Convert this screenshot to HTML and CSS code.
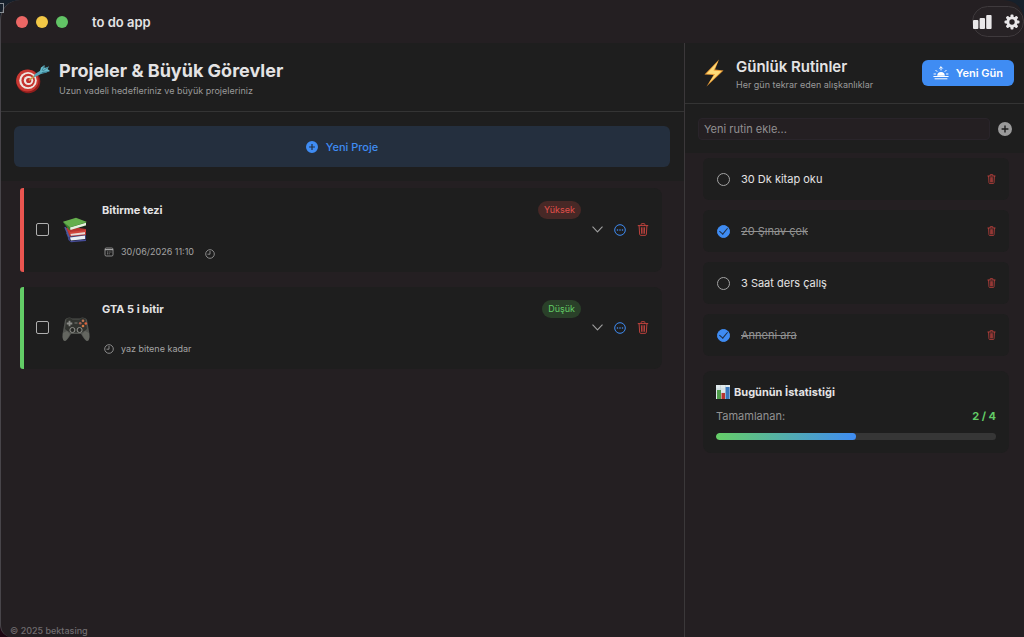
FILE: index.html
```html
<!DOCTYPE html>
<html lang="tr">
<head>
<meta charset="utf-8">
<meta name="viewport" content="width=device-width, initial-scale=1">
<title>to do app</title>
<link rel="stylesheet" href="styles.css">
</head>
<body>
<svg class="defs" aria-hidden="true">
  <symbol id="trash" viewBox="0 0 12 14">
    <g fill="none" stroke="currentColor" stroke-linecap="round" stroke-linejoin="round">
      <path d="M.8 2.8H11.2M4 2.6V1.3Q4 .7 4.6 .7H7.4Q8 .7 8 1.3V2.6M1.8 3L2.4 12.2Q2.5 13.3 3.5 13.3H8.5Q9.5 13.3 9.6 12.2L10.2 3M4.3 5L4.5 11.2M6 5V11.2M7.7 5L7.5 11.2"/>
    </g>
  </symbol>
  <symbol id="more" viewBox="0 0 12 12">
    <circle cx="6" cy="6" r="5.3" fill="none" stroke="currentColor"/>
    <g fill="currentColor"><circle cx="3.5" cy="6" r=".8"/><circle cx="6" cy="6" r=".8"/><circle cx="8.5" cy="6" r=".8"/></g>
  </symbol>
  <symbol id="chevron" viewBox="0 0 10 6">
    <path d="M.7 .7L5 5.2L9.3 .7" fill="none" stroke="currentColor" stroke-linecap="round" stroke-linejoin="round"/>
  </symbol>
  <symbol id="clock" viewBox="0 0 10 10">
    <path d="M5 2V5.2H2.5" fill="none" stroke="currentColor" stroke-width=".8"/><circle cx="5" cy="5" r="4.3" fill="none" stroke="currentColor" stroke-width=".8"/>
  </symbol>
  <symbol id="plus" viewBox="0 0 14 14">
    <path fill="currentColor" fill-rule="evenodd" d="M7 0a7 7 0 1 0 0 14A7 7 0 0 0 7 0ZM6.3 3.6H7.7V6.3H10.4V7.7H7.7V10.4H6.3V7.7H3.6V6.3H6.3Z"/>
  </symbol>
</svg>
<div class="window">
  <header class="titlebar">
    <div class="lights"><span class="light light-red"></span><span class="light light-yellow"></span><span class="light light-green"></span></div>
    <h1 class="app-title">to do app</h1>
    <div class="tools">
      <button class="icon-button" aria-label="İstatistikler">
        <svg width="19" height="14" viewBox="0 0 19 14" fill="#e9e7e9"><rect x="0" y="5" width="5.4" height="9" rx="1"/><rect x="6.6" y="3" width="5.4" height="11" rx="1"/><rect x="13.2" y="0" width="5.4" height="14" rx="1"/></svg>
      </button>
      <button class="icon-button" aria-label="Ayarlar">
        <svg width="16" height="16" viewBox="0 0 16 16"><g fill="#e9e7e9"><g id="teeth"><rect x="6.5" y="0.5" width="3" height="15" rx="1"/><rect x="0.5" y="6.5" width="15" height="3" rx="1"/></g><use href="#teeth" transform="rotate(45 8 8)"/><circle cx="8" cy="8" r="5.6"/></g><circle cx="8" cy="8" r="2.7" fill="#272225"/></svg>
      </button>
    </div>
  </header>
  <div class="columns">
    <main class="projects">
      <header class="panel-head projects-head">
        <svg class="target" width="36" height="32" viewBox="0 0 36 32" aria-hidden="true">
          <ellipse cx="13.3" cy="18.5" rx="12" ry="11.7" fill="#8d1d1c"/><ellipse cx="12.4" cy="17.5" rx="11.2" ry="11" fill="#c93832"/>
          <ellipse cx="13" cy="17.5" rx="8.8" ry="8.6" fill="#eee5df"/><ellipse cx="13.2" cy="17.5" rx="6.8" ry="6.7" fill="#c6332f"/><ellipse cx="13.5" cy="17.5" rx="4.7" ry="4.6" fill="#efe6e0"/><circle cx="13.7" cy="17.5" r="2.6" fill="#c02d2b"/>
          <path d="M14 17.5L20 12.5" stroke="#c99a45" stroke-width="1.6"/>
          <path d="M18.5 14.5L20 11L27 6.5L29 9.5L22 13Z" fill="#56a5b7"/>
          <path d="M25 8L26 4.5L29.5 2L29.5 5L34 3.5L32.5 6L35 8L30 10L26 10.5Z" fill="#68bccc"/><path d="M27 9L35 8L30 10L26 10.5Z" fill="#397f92"/><path d="M27 8L29.5 2M28 8L34 3.5" stroke="#2e6474" stroke-width=".6"/>
        </svg>
        <div class="head-text"><h2 class="title-large">Projeler &amp; Büyük Görevler</h2><p class="subtitle">Uzun vadeli hedefleriniz ve büyük projeleriniz</p></div>
      </header>
      <div class="add-project"><button class="new-project"><svg width="12" height="12" aria-hidden="true"><use href="#plus"/></svg>Yeni Proje</button></div>
      <div class="project-list">
        <article class="card card-high">
          <input class="check-square" type="checkbox" aria-label="Bitirme tezi">
          <svg class="emoji" width="28" height="28" viewBox="0 0 28 28" aria-hidden="true">
            <path d="M4 17L7 24.5L24 23V18L10 16Z" fill="#38417e"/><path d="M8 21.5L23 19.5V23L9 24.5Z" fill="#e9eef2"/><path d="M6 20L8 25L24 23.5V25L9 26.2L6.5 24Z" fill="#464c98"/>
            <path d="M3 12L7 20.5L24 19V13L10 11Z" fill="#b73531"/><path d="M8 16.8L23 15.5V18.3L9 19.7Z" fill="#e8d9d4"/><path d="M5 11.5L8 16L24 14V16L8 18Z" fill="#cf453b"/><path d="M3 11L7 21" stroke="#465ba1" stroke-width="1.6"/>
            <path d="M1 6L7 14L24 9.8V6L13 3Z" fill="#397f32"/><path d="M8 11.5L24 6.7V9.3L8.5 14Z" fill="#e7efe0"/><path d="M1 5.7L14 1.8L25 6L8 11.3Z" fill="#65ae4d"/>
          </svg>
          <div class="details"><h3 class="card-title">Bitirme tezi</h3>
            <div class="meta"><svg width="10" height="10" viewBox="0 0 10 10" aria-hidden="true"><rect x="1" y="1" width="8" height="8" rx="1.2" fill="none" stroke="currentColor" stroke-width=".8"/><path d="M1 2.7H9" stroke="currentColor" stroke-width="1.2"/><path d="M3 5H7.5M3 6.8H6" stroke="currentColor" stroke-width=".8" stroke-dasharray="1 .7"/></svg><time>30/06/2026 11:10</time><svg class="late-clock" width="10" height="10" aria-hidden="true"><use href="#clock"/></svg></div>
          </div>
          <span class="badge badge-high">Yüksek</span>
          <div class="actions"><button class="icon-button gray" aria-label="Genişlet"><svg width="11" height="7"><use href="#chevron"/></svg></button><button class="icon-button blue" aria-label="Diğer"><svg width="12" height="12"><use href="#more"/></svg></button><button class="icon-button red" aria-label="Sil"><svg width="12" height="13"><use href="#trash"/></svg></button></div>
        </article>
        <article class="card card-low">
          <input class="check-square" type="checkbox" aria-label="GTA 5 i bitir">
          <svg class="emoji" width="28" height="28" viewBox="0 0 28 28" aria-hidden="true">
            <path d="M3 6Q4 3.7 8 3.5L10 4.5H18L20 3.5Q24 3.7 25 6L27.5 20Q28 27 25 27Q23 27 19 20H9Q5 27 3 27Q0 27 .5 20Z" fill="#51534f"/><path d="M4.5 5Q8 3 10.5 5.5H17.5Q20 3 23.5 5L25 15Q23 17 19 18.5H9Q5 17 3 15Z" fill="#31332f"/>
            <path d="M1 19L5 17L8 20Q5 26 3 27Q0 27 1 19ZM27 19L23 17L20 20Q23 26 25 27Q28 27 27 19Z" fill="#646660"/>
            <path d="M7.5 6.7V12.3M4.7 9.5H10.3" stroke="#8b8c88" stroke-width="1.8"/><circle cx="10.4" cy="16" r="2.5" fill="#272825" stroke="#91928d"/><circle cx="17.6" cy="16" r="2.5" fill="#272825" stroke="#91928d"/>
            <circle cx="21" cy="6.7" r="1.3" fill="#bf7554"/><circle cx="18.2" cy="9.3" r="1.3" fill="#a65e50"/><circle cx="23.8" cy="9.5" r="1.3" fill="#e0623d"/><circle cx="21" cy="12" r="1.3" fill="#d77845"/><path d="M12.5 9H15.5" stroke="#7b7c77"/>
          </svg>
          <div class="details"><h3 class="card-title">GTA 5 i bitir</h3><div class="meta"><svg width="10" height="10" aria-hidden="true"><use href="#clock"/></svg><span>yaz bitene kadar</span></div></div>
          <span class="badge badge-low">Düşük</span>
          <div class="actions"><button class="icon-button gray" aria-label="Genişlet"><svg width="11" height="7"><use href="#chevron"/></svg></button><button class="icon-button blue" aria-label="Diğer"><svg width="12" height="12"><use href="#more"/></svg></button><button class="icon-button red" aria-label="Sil"><svg width="12" height="13"><use href="#trash"/></svg></button></div>
        </article>
      </div>
      <footer class="footer">© 2025 bektasing</footer>
    </main>
    <aside class="routines">
      <header class="panel-head routines-head">
        <svg class="bolt" width="20" height="28" viewBox="0 0 20 28" aria-hidden="true"><path d="M15 .5L.5 15.5L9.5 16L2.5 27.5L19.5 11.5L11 10.5Z" fill="#e89a35"/><path d="M14 2.5L2.5 14.7L11 15L5 24L17.5 12.2L9.5 11.5Z" fill="#ffdc78"/></svg>
        <div class="head-text routines-text"><h2 class="title-medium">Günlük Rutinler</h2><p class="subtitle">Her gün tekrar eden alışkanlıklar</p></div>
        <button class="new-day"><svg width="16" height="14" viewBox="0 0 16 14" aria-hidden="true"><g fill="none" stroke="#fff" stroke-linecap="round"><path d="M.8 10.5H15.2M2 12.8H14M8 1V4M6.5 2.3L8 .8L9.5 2.3M2.8 4.3L4 5.5M13.2 4.3L12 5.5M1 8H2.5M13.5 8H15"/></g><path d="M4.2 9.7A3.8 3.8 0 0 1 11.8 9.7Z" fill="#fff"/></svg>Yeni Gün</button>
      </header>
      <form class="add-routine"><input class="routine-input" type="text" placeholder="Yeni rutin ekle..." aria-label="Yeni rutin ekle"><button class="icon-button light-gray" type="button" aria-label="Ekle"><svg width="14" height="14"><use href="#plus"/></svg></button></form>
      <div class="routine-list">
        <div class="routine"><input id="r1" class="check-round" type="checkbox"><label for="r1">30 Dk kitap oku</label><button class="icon-button red" aria-label="Sil"><svg width="9" height="10"><use href="#trash"/></svg></button></div>
        <div class="routine"><input id="r2" class="check-round" type="checkbox" checked><label for="r2">20 Şınav çek</label><button class="icon-button red" aria-label="Sil"><svg width="9" height="10"><use href="#trash"/></svg></button></div>
        <div class="routine"><input id="r3" class="check-round" type="checkbox"><label for="r3">3 Saat ders çalış</label><button class="icon-button red" aria-label="Sil"><svg width="9" height="10"><use href="#trash"/></svg></button></div>
        <div class="routine"><input id="r4" class="check-round" type="checkbox" checked><label for="r4">Anneni ara</label><button class="icon-button red" aria-label="Sil"><svg width="9" height="10"><use href="#trash"/></svg></button></div>
      </div>
      <section class="stats">
        <h3 class="stats-title"><svg width="14" height="14" viewBox="0 0 14 14" aria-hidden="true"><rect width="14" height="14" fill="#dfe9ec"/><path d="M0 4H14M0 8H14M4.5 0V14M9.5 0V14" stroke="#b6c9d1" stroke-width=".5"/><rect x="1" y="5" width="4" height="9" fill="#4e9d4a"/><rect x="5.5" y="8" width="3.5" height="6" fill="#b9352f"/><rect x="9.6" y="2" width="4" height="12" fill="#3977bd"/></svg>Bugünün İstatistiği</h3>
        <div class="stats-row"><span>Tamamlanan:</span><strong class="count">2 / 4</strong></div>
        <div class="track"><div class="fill" style="width:50%"></div></div>
      </section>
    </aside>
  </div>
</div>
</body>
</html>
```
FILE: styles.css
```css
* { box-sizing: border-box; }
body {
  margin: 0;
  background: linear-gradient(#16202b, #1d0712);
  color: #e4e3e4;
  font-family: Inter, "Noto Sans", sans-serif;
  font-size: 11px;
}
/* Edge of a desktop item behind the window corner */
body::before {
  content: "";
  position: absolute;
  top: 3px;
  left: 0;
  width: 3px;
  height: 8px;
  border: 1px solid #8b9096;
  border-left: 0;
}
h1, h2, h3, p { margin: 0; }
button, input { font: inherit; }
.defs { display: none; }
svg { flex: none; display: block; }

.window {
  min-height: 100vh;
  display: flex;
  flex-direction: column;
  background: #241f22;
  border: solid #48454a;
  border-width: 0 0 0 1px;
  border-radius: 20px 20px 0 12px;
  overflow: hidden;
}
.titlebar { display: flex; align-items: center; height: 43px; padding: 0 0 0 15px; }
.lights { display: flex; gap: 8px; }
.light { width: 12px; height: 12px; border-radius: 50%; }
.light-red { background: #ec6765; }
.light-yellow { background: #f3c846; }
.light-green { background: #62c466; }
.app-title { margin-left: 24px; font-size: 13px; line-height: 18px; font-weight: 600; flex: 1; }
.tools {
  display: flex;
  align-items: center;
  gap: 12px;
  height: 31px;
  padding: 0 3px 0 0;
  border: 1px solid #3f3a3d;
  border-radius: 16px;
  background: #272225;
}
.icon-button { display: flex; padding: 0; border: 0; background: none; color: inherit; }
.gray { color: #a0a0a0; }
.light-gray { color: #9b9b9b; }
.blue { color: #3f8cf3; }
.red { color: #c8443f; }

.columns { flex: 1; display: grid; grid-template-columns: minmax(0, 1fr) 340px; }
.projects { display: flex; flex-direction: column; min-width: 0; }
.routines { border-left: 1px solid #3b383a; }
.panel-head { display: flex; align-items: center; background: #1e1e1e; border-bottom: 1px solid #343434; }
.projects-head { height: 69px; gap: 8px; padding: 0 14px; }
.target { margin-top: 4px; }
.head-text { flex: 1; padding-top: 3px; }
.title-large { font-size: 18px; line-height: 24px; font-weight: 700; }
.title-medium { font-size: 15px; line-height: 20px; font-weight: 600; }
.subtitle { font-size: 9px; line-height: 16px; color: #9a9a9a; }

.add-project { padding: 14px 14px 14px 13px; background: #1e1e1e; }
.new-project {
  display: flex;
  align-items: center;
  justify-content: center;
  gap: 8px;
  width: 100%;
  height: 41px;
  border: 0;
  border-radius: 6px;
  background: #242f3e;
  color: #3f8cf3;
  font-weight: 500;
}
.project-list { display: flex; flex-direction: column; gap: 15px; padding: 7px 22px 0 19px; }
.card {
  display: flex;
  align-items: center;
  min-height: 82px;
  padding: 12px 13px 13px 12px;
  border-left: 4px solid;
  border-radius: 3px 8px 8px 3px;
  background: #1e1e1e;
}
.card-high { min-height: 84px; border-color: #ea5550; }
.card-low { border-color: #62cc66; }
.check-square {
  appearance: none;
  flex: none;
  width: 13px;
  height: 13px;
  margin: 0;
  border: 1px solid #b0b0b0;
  border-radius: 2px;
}
.emoji { margin-left: 13px; }
.details {
  flex: 1;
  align-self: stretch;
  display: flex;
  flex-direction: column;
  justify-content: space-between;
  margin-left: 12px;
}
.card-title { font-size: 11px; line-height: 20px; font-weight: 700; }
.meta { display: flex; align-items: center; gap: 7px; padding-left: 2px; font-size: 9px; line-height: 14px; color: #a4a4a4; }
.late-clock { margin: 4px 0 0 4px; }
.badge { align-self: flex-start; margin-top: 1px; padding: 0 6px; border-radius: 9px; font-size: 9px; line-height: 18px; }
.badge-high { background: #472826; color: #e0504b; }
.badge-low { background: #2a4029; color: #62cc66; }
.actions { display: flex; align-items: center; gap: 11px; margin-left: 11px; }
.footer { margin-top: auto; padding: 0 9px; font-size: 9px; line-height: 13px; font-weight: 500; color: #716d70; }

.routines-head { height: 61px; padding: 0 10px 0 19px; }
.routines-text { margin-left: 12px; }
.new-day {
  display: flex;
  align-items: center;
  gap: 7px;
  height: 26px;
  padding: 0 11px;
  border: 0;
  border-radius: 6px;
  background: #3f8cf3;
  color: #fff;
  font-weight: 600;
}
.add-routine { display: flex; align-items: center; gap: 8px; height: 49px; padding: 0 12px 0 13px; background: #1e1e1e; }
.routine-input {
  flex: 1;
  min-width: 0;
  height: 22px;
  padding: 0 5px;
  border: 1px solid #29242a;
  border-radius: 4px;
  background: #241f22;
  color: #e4e3e4;
}
.routine-input::placeholder { color: #929092; opacity: 1; }
.routine-list { display: flex; flex-direction: column; gap: 10px; padding: 5px 15px 0 18px; }
.routine {
  display: flex;
  align-items: center;
  height: 42px;
  padding: 0 13px 0 14px;
  border-radius: 6px;
  background: #1e1e1e;
}
.routine label { flex: 1; margin-left: 11px; }
.check-round {
  appearance: none;
  flex: none;
  display: grid;
  place-items: center;
  width: 13px;
  height: 13px;
  margin: 0;
  border: 1px solid #a3a3a3;
  border-radius: 50%;
}
.check-round:checked { border-color: #3f8cf3; background: #3f8cf3; }
.check-round:checked::before {
  content: "";
  width: 4px;
  height: 7px;
  margin-bottom: 2px;
  border: solid #1e2d42;
  border-width: 0 1px 1px 0;
  transform: rotate(40deg);
}
.check-round:checked + label { color: #929292; text-decoration: line-through; }
.stats { margin: 15px 15px 0 18px; padding: 13px; border-radius: 8px; background: #1e1e1e; }
.stats-title { display: flex; align-items: center; gap: 4px; font-size: 11px; line-height: 16px; font-weight: 700; }
.stats-row { display: flex; justify-content: space-between; margin: 8px 0 9px; line-height: 16px; color: #929292; }
.count { color: #62cc66; }
.track { height: 7px; border-radius: 4px; background: #363636; overflow: hidden; }
.fill { height: 100%; border-radius: 4px; background: linear-gradient(90deg, #66cf67, #3f8cf3); }
```
